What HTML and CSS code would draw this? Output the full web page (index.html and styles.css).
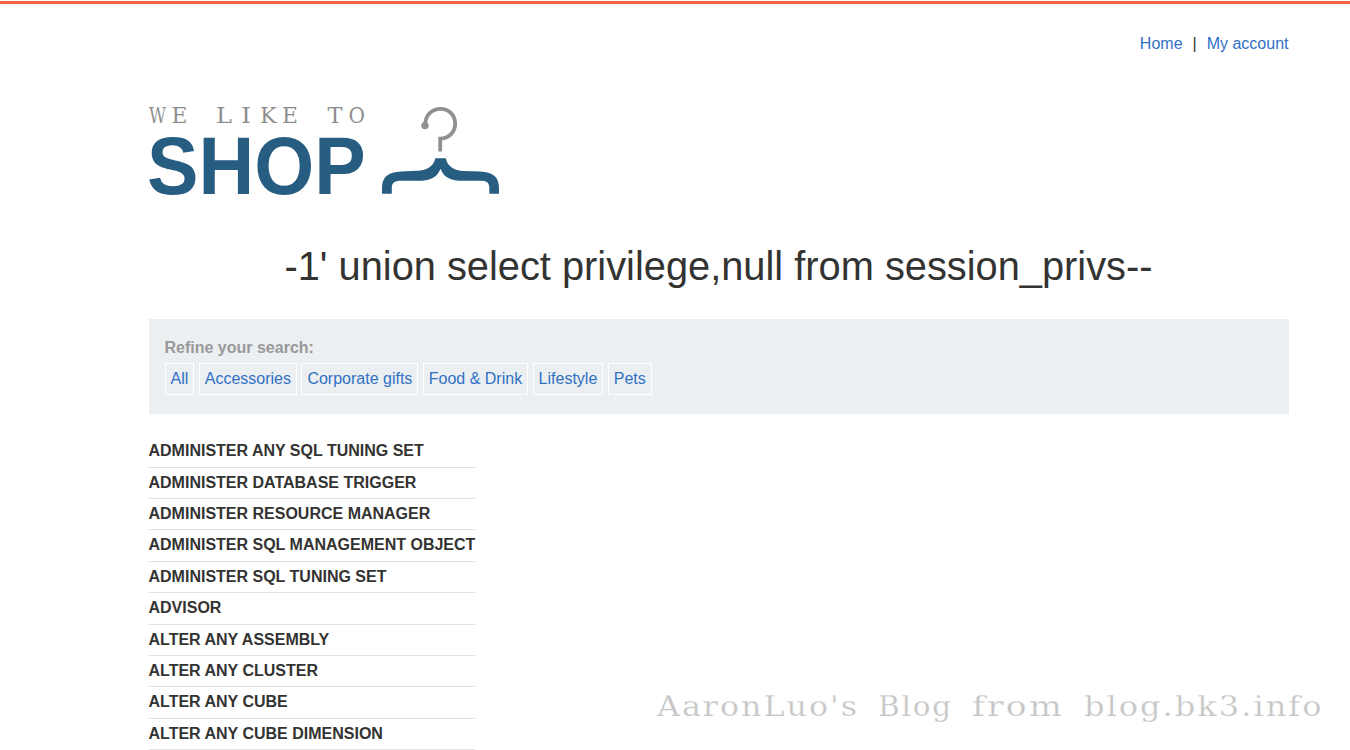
FILE: index.html
```html
<!DOCTYPE html>
<html lang="en">
<head>
<meta charset="utf-8">
<title>We like to shop</title>
<link rel="stylesheet" href="styles.css">
</head>
<body>
<div class="topline"></div>
<div class="container">
  <nav class="nav"><a href="#">Home</a><span>|</span><a href="#">My account</a></nav>
  <header class="brand">
    <svg class="logo" viewBox="149 105 352 92" role="img">
      <g class="tagline">
        <text x="149" y="123" textLength="17" lengthAdjust="spacingAndGlyphs">W</text>
        <text x="171.5" y="123" textLength="16" lengthAdjust="spacingAndGlyphs">E</text>
        <text x="216" y="123" textLength="16" lengthAdjust="spacingAndGlyphs">L</text>
        <text x="241" y="123" textLength="10" lengthAdjust="spacingAndGlyphs">I</text>
        <text x="260" y="123" textLength="16.500" lengthAdjust="spacingAndGlyphs">K</text>
        <text x="282" y="123" textLength="16" lengthAdjust="spacingAndGlyphs">E</text>
        <text x="327.5" y="123" textLength="15" lengthAdjust="spacingAndGlyphs">T</text>
        <text x="348.500" y="123" textLength="16.500" lengthAdjust="spacingAndGlyphs">O</text>
      </g>
      <text class="shop" x="147" y="194" textLength="218.6" lengthAdjust="spacingAndGlyphs">SHOP</text>
      <circle class="knob" cx="425" cy="125.6" r="3.7"/>
      <path class="hook" d="M425.3 124C425.3 115.2 432 108.8 440.5 108.8S455.2 115.4 455.2 123.8S448.5 138.6 440.2 138.6V151.6"/>
      <path class="hanger" d="M435.3 158.3H445.8C447.5 166.5 454 170.8 464 171L480 171.500C492.500 172 499 176.500 499 188V193.700H489.300V188C489.300 182.500 486.500 180.800 480 180.800H466C453 181.300 444.500 179 440.500 168.700C436.500 179 428 181.300 415 180.800H402C395 180.800 391.800 182.500 391.800 188V193.700H382V188C382 176.500 388.500 172 401 171.500L417 170.700C427.500 170.500 433.700 166 435.300 158.300Z"/>
    </svg>
  </header>
  <h1 class="title">-1' union select privilege,null from session_privs--</h1>
  <section class="filters">
    <div class="filters-label">Refine your search:</div>
    <div class="filters-list">
      <a href="#">All</a>
      <a href="#">Accessories</a>
      <a href="#">Corporate gifts</a>
      <a href="#">Food &amp; Drink</a>
      <a href="#">Lifestyle</a>
      <a href="#">Pets</a>
    </div>
  </section>
  <div class="results">
    <div class="row">ADMINISTER ANY SQL TUNING SET</div>
    <div class="row">ADMINISTER DATABASE TRIGGER</div>
    <div class="row">ADMINISTER RESOURCE MANAGER</div>
    <div class="row">ADMINISTER SQL MANAGEMENT OBJECT</div>
    <div class="row">ADMINISTER SQL TUNING SET</div>
    <div class="row">ADVISOR</div>
    <div class="row">ALTER ANY ASSEMBLY</div>
    <div class="row">ALTER ANY CLUSTER</div>
    <div class="row">ALTER ANY CUBE</div>
    <div class="row">ALTER ANY CUBE DIMENSION</div>
  </div>
</div>
<svg class="watermark" viewBox="650 685 690 50">
  <text x="657" y="716" textLength="202" lengthAdjust="spacingAndGlyphs">AaronLuo's</text>
  <text x="878" y="716" textLength="75" lengthAdjust="spacingAndGlyphs">Blog</text>
  <text x="972" y="716" textLength="92" lengthAdjust="spacingAndGlyphs">from</text>
  <text x="1084" y="716" textLength="239.500" lengthAdjust="spacingAndGlyphs">blog.bk3.info</text>
</svg>
</body>
</html>
```

FILE: styles.css
```css
* { box-sizing: border-box; }
body {
  margin: 0;
  height: 750px;
  overflow: hidden;
  background: #fff;
  color: #333332;
  font: 16px/24px "Liberation Sans", Arial, sans-serif;
}
a { color: #3071c4; text-decoration: none; }
.topline { height: 4px; border-top: 1px solid #fff; background: #f0653d; }
.container { width: 1140px; margin-left: 148.5px; }
.nav {
  display: flex;
  justify-content: flex-end;
  gap: 10px;
  padding-top: 28px;
}
.brand { padding-top: 49px; height: 141px; }
.logo { display: block; width: 352px; height: 92px; overflow: visible; }
.tagline {
  font: 21.5px "DejaVu Serif", serif;
  fill: #8a8a8a;
  stroke: #fff;
  stroke-width: 0.1px;
}
.shop { font: bold 81px "Liberation Sans", Arial, sans-serif; fill: #285d82; }
.knob { fill: #8e9091; }
.hook { fill: none; stroke: #8e9091; stroke-width: 3.8px; }
.hanger { fill: #285d82; }
.title {
  margin: 46px 0 0;
  font-size: 39.8px;
  line-height: 46px;
  font-weight: 400;
  text-align: center;
}
.filters {
  height: 95px;
  margin-top: 30px;
  padding: 17px 16px 0;
  background: #ebeff2;
}
.filters-label { color: #999; font-weight: 700; }
.filters-list { display: flex; gap: 4.45px; margin-top: 3px; }
.filters-list a {
  height: 32px;
  padding: 0 5px;
  border: 1px solid #fff;
  line-height: 30px;
}
.results { width: 326.5px; margin-top: 22.2px; }
.row {
  height: 31.4px;
  padding-top: 3px;
  border-bottom: 1px solid #e2e2e2;
  font-weight: 700;
  white-space: nowrap;
}
.watermark {
  position: absolute;
  left: 650px;
  top: 685px;
  width: 690px;
  height: 50px;
  font: 28.5px "DejaVu Serif", serif;
  letter-spacing: 1.8px;
  fill: #c6c6c6;
  stroke: #fff;
  stroke-width: 0.25px;
}
```
